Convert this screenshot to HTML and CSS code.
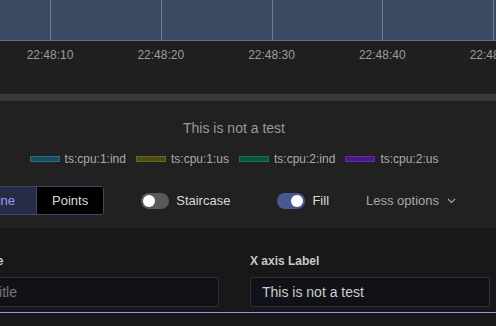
FILE: index.html
```html
<!DOCTYPE html>
<html lang="en">
<head>
    <meta charset="UTF-8">
    <title>Graph options</title>
    <link rel="stylesheet" href="styles.css">
</head>
<body>
    <div class="chart">
        <div class="grid-col"></div>
        <div class="grid-col"></div>
        <div class="grid-col"></div>
        <div class="grid-col"></div>
        <div class="grid-col last"></div>
    </div>
    <div class="axis">
        <span>22:48:10</span>
        <span>22:48:20</span>
        <span>22:48:30</span>
        <span>22:48:40</span>
        <span>22:48:50</span>
    </div>
    <div class="divider"></div>

    <div class="panel">
        <div class="panel-inner">
            <div class="chart-title">This is not a test</div>
            <div class="legend">
                <span class="legend-item"><i class="swatch teal"></i>ts:cpu:1:ind</span>
                <span class="legend-item"><i class="swatch olive"></i>ts:cpu:1:us</span>
                <span class="legend-item"><i class="swatch green"></i>ts:cpu:2:ind</span>
                <span class="legend-item"><i class="swatch purple"></i>ts:cpu:2:us</span>
            </div>
        </div>
        <div class="controls">
            <div class="btn-group">
                <button class="seg active">Line</button>
                <button class="seg">Points</button>
            </div>
            <label class="toggle staircase">
                <span class="track"><span class="knob"></span></span>
                Staircase
            </label>
            <label class="toggle fill">
                <span class="track on"><span class="knob"></span></span>
                Fill
            </label>
            <button class="less">
                Less options
                <svg width="9" height="6" viewBox="0 0 9 6"><path d="M1 1l3.5 3.5L8 1" fill="none" stroke="#a8a8a8" stroke-width="1.1"/></svg>
            </button>
        </div>
    </div>

    <div class="form">
        <div class="field">
            <div class="field-label">Title</div>
            <input class="field-input" placeholder="Title">
        </div>
        <div class="field">
            <div class="field-label">X axis Label</div>
            <input class="field-input" value="This is not a test">
        </div>
    </div>
    <div class="focus-line"></div>
</body>
</html>
```

FILE: styles.css
```css
body {
    margin: 0;
    background: #181818;
    font-family: "Liberation Sans", Arial, sans-serif;
    overflow: hidden;
}

.chart {
    display: flex;
    height: 40px;
    padding-left: 50px;
    background: #3b4a63;
    border-bottom: 1px solid #5f6f8d;
}

.grid-col {
    width: 110.75px;
    flex-shrink: 0;
    border-left: 1px solid #6a7a97;
    box-sizing: border-box;
}

.grid-col.last {
    width: 3px;
}

.axis {
    display: flex;
    height: 53px;
    padding-top: 7px;
    box-sizing: border-box;
    margin-left: -5.4px;
    background: #1f1f1f;
    font-size: 12px;
    line-height: 14px;
    color: #9d9d9d;
    white-space: nowrap;
}

.axis span {
    width: 110.75px;
    flex-shrink: 0;
    text-align: center;
}

.divider {
    height: 7px;
    background: #383838;
}

.panel {
    background: #212121;
    padding: 19px 0 13px;
}

.panel-inner {
    margin-left: -28px;
    text-align: center;
}

.chart-title {
    font-size: 14px;
    line-height: 16px;
    color: #989898;
}

.legend {
    display: flex;
    justify-content: center;
    gap: 10px;
    margin-top: 16px;
    font-size: 12px;
    line-height: 14px;
    color: #ababab;
}

.legend-item {
    display: flex;
    align-items: center;
    gap: 5px;
}

.swatch {
    display: block;
    width: 30px;
    height: 6px;
    box-sizing: border-box;
    border: 1px solid;
}

.swatch.teal { background: #1c4b5e; border-color: #2a6f8a; }
.swatch.olive { background: #4b4b16; border-color: #6b6b20; }
.swatch.green { background: #0c5238; border-color: #13774f; }
.swatch.purple { background: #4a1982; border-color: #6a26b8; }

.controls {
    display: flex;
    align-items: center;
    margin-top: 20px;
    font-size: 13px;
}

.btn-group {
    display: flex;
    height: 29px;
    margin-left: -25.5px;
    border: 1px solid #40456f;
    border-radius: 3px;
    box-sizing: border-box;
    overflow: hidden;
}

.seg {
    border: none;
    margin: 0;
    padding: 0 15px;
    font: inherit;
    background: #000;
    color: #dcdcdc;
}

.seg.active {
    background: #272b45;
    color: #8d9ef5;
    padding: 0 21px 0 15px;
    border-right: 1px solid #40456f;
}

.toggle {
    display: flex;
    align-items: center;
    gap: 7px;
    color: #d9d9d9;
}

.toggle.staircase { margin-left: 37px; }
.toggle.fill { margin-left: 47px; }

.track {
    display: flex;
    align-items: center;
    width: 28px;
    height: 16px;
    padding: 0 2px;
    box-sizing: border-box;
    border-radius: 8px;
    background: #5a5a5a;
}

.track.on {
    background: #4a5890;
    justify-content: flex-end;
}

.knob {
    width: 12px;
    height: 12px;
    border-radius: 50%;
    background: #fff;
}

.less {
    display: flex;
    align-items: center;
    gap: 8px;
    margin-left: 37px;
    padding: 0;
    border: none;
    background: none;
    font: inherit;
    color: #a8a8a8;
}

.form {
    display: flex;
    gap: 31px;
    margin-left: -21px;
    padding-top: 26px;
}

.field {
    width: 240px;
    flex-shrink: 0;
}

.field-label {
    font-size: 12px;
    line-height: 14px;
    font-weight: bold;
    color: #c8c8c8;
    margin-bottom: 9px;
}

.field-input {
    display: block;
    width: 100%;
    height: 30px;
    box-sizing: border-box;
    margin: 0;
    padding: 0 11px;
    border: 1px solid #303035;
    border-radius: 2px;
    background: #111217;
    font-family: inherit;
    font-size: 14px;
    color: #cdcdcd;
    outline: none;
}

.field-input::placeholder {
    color: #767676;
}

.focus-line {
    height: 1px;
    margin-top: 5px;
    background: #8699f3;
}
```
